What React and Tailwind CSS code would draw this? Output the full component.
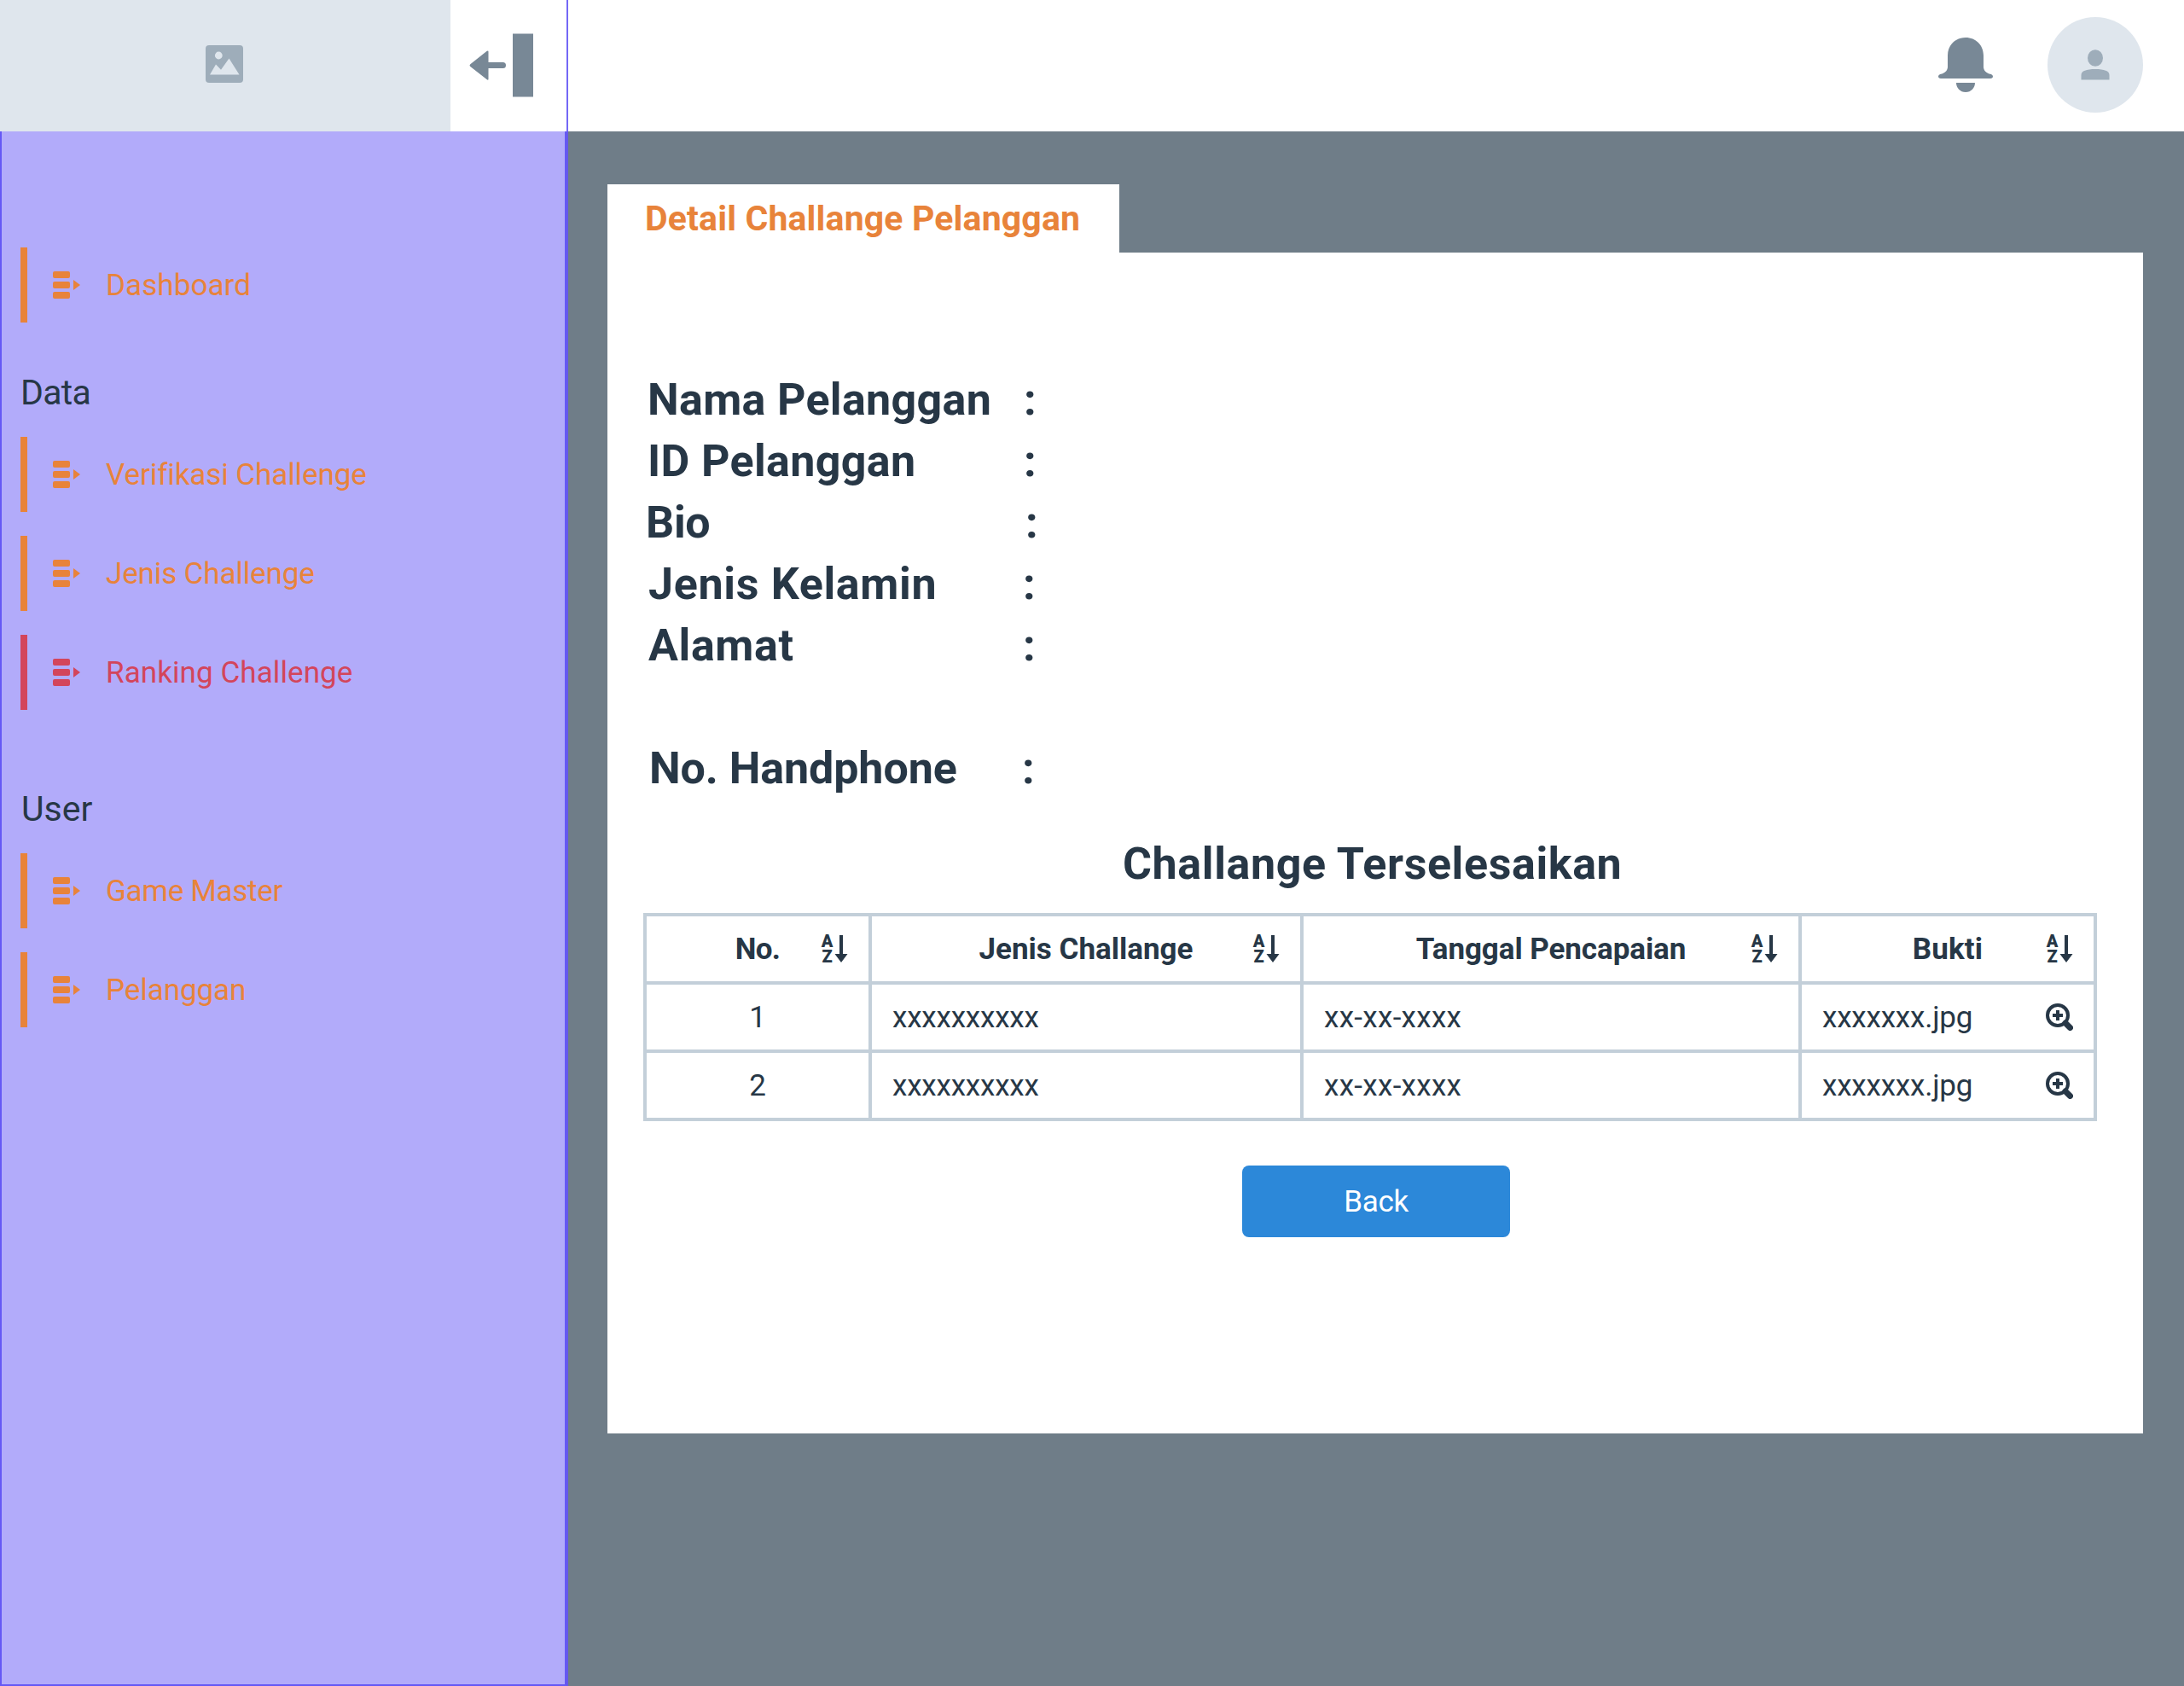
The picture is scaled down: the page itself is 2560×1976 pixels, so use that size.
const menuTop = [{ label: "Dashboard", text: "tracking-[0.08px]" }];
const menuData = [
  { label: "Verifikasi Challenge", text: "tracking-[-0.08px]" },
  { label: "Jenis Challenge", text: "tracking-[-0.14px]" },
  { label: "Ranking Challenge", text: "tracking-[0.08px]", active: true },
];
const menuUser = [
  { label: "Game Master", text: "tracking-[-0.3px]" },
  { label: "Pelanggan", text: "tracking-[-0.07px]" },
];

const fields = [
  { label: "Nama Pelanggan", box: "ml-[47px] w-[441px] tracking-[0.32px]" },
  { label: "ID Pelanggan", box: "ml-[47px] w-[441px] tracking-[0.35px]" },
  { label: "Bio", box: "ml-[45px] w-[445px] tracking-[-0.3px]" },
  { label: "Jenis Kelamin", box: "ml-[48px] w-[439px] tracking-[0.66px]" },
  { label: "Alamat", box: "ml-[48px] w-[439px] tracking-[0.6px]" },
  null,
  { label: "No. Handphone", box: "ml-[49px] w-[437px] tracking-[-0.1px]" },
];

const columns = [
  { label: "No.", text: "tracking-[-0.7px]" },
  { label: "Jenis Challange", text: "tracking-[0px]" },
  { label: "Tanggal Pencapaian", text: "tracking-[-0.08px]" },
  { label: "Bukti", text: "tracking-[0.13px]" },
];
const rows = ["1", "2"];

function ListIcon() {
  return (
    <svg viewBox="0 0 32 32" className="h-8 w-8 fill-current">
      <rect x="0" y="0" width="20" height="8" rx="2" />
      <rect x="0" y="12" width="20" height="8" rx="2" />
      <rect x="0" y="24" width="20" height="8" rx="2" />
      <path d="M24 10l8 6-8 6z" />
    </svg>
  );
}

function MenuItem({ item }) {
  return (
    <a className={`flex h-[88px] items-center border-l-8 pl-[30px] ${item.active ? "border-[#d3455b] text-[#d3455b]" : "border-[#e8833a] text-[#e8833a]"}`}>
      <ListIcon />
      <span className={`ml-[30px] pt-0.5 text-[35px] leading-[44px] whitespace-nowrap ${item.text}`}>{item.label}</span>
    </a>
  );
}

function Menu({ items, className }) {
  return (
    <nav className={`flex flex-col gap-7 ${className}`}>
      {items.map((item) => (
        <MenuItem key={item.label} item={item} />
      ))}
    </nav>
  );
}

function SortIcon() {
  return (
    <span className="flex h-8 w-8">
      <span className="flex w-[15px] flex-col items-center gap-1 text-[20px] leading-[14px] font-black">
        <span>A</span>
        <span>Z</span>
      </span>
      <svg viewBox="0 0 17 32" className="h-8 w-[17px] fill-current">
        <path d="M7 0h4v22h5.500L9 32 1.500 22H7z" />
      </svg>
    </span>
  );
}

function ZoomIcon() {
  return (
    <svg viewBox="0 0 32 32" className="h-8 w-8 fill-none stroke-current">
      <circle cx="14" cy="14" r="12" strokeWidth="4" />
      <path d="M8 14h12M14 8v12" strokeWidth="4" />
      <path d="M23 23l5.500 5.500" strokeWidth="7" strokeLinecap="round" />
    </svg>
  );
}

export default function App() {
  return (
    <div className="flex h-[1976px] w-[2560px] flex-col overflow-hidden bg-[#6f7d88] font-['Roboto',sans-serif] text-[#273746]">
      <header className="flex h-[154px] shrink-0 bg-white">
        <div className="flex w-[528px] items-start justify-center bg-[#dfe6ed] pr-0.5 pt-[53px]">
          <svg viewBox="0 0 44 44" className="h-11 w-11">
            <rect width="44" height="44" rx="4" fill="#9eadba" />
            <circle cx="15.3" cy="12" r="4.4" fill="#dfe6ed" />
            <path d="M5 34.5L12 22.5l6 6.2L27.5 15.5l12 19z" fill="#dfe6ed" />
          </svg>
        </div>
        <div className="flex w-[136px] justify-end pr-[39px] pt-[39px] text-[#788896]">
          <svg viewBox="0 0 75 75" className="h-[75px] w-[75px] fill-current">
            <path d="M1.3 36.200L20.500 21q2-1.400 2 .8V34H39.500a3.500 3.500 0 0 1 0 7H22.500V53.500q0 2-2 .6L1.300 38.900q-1.500-1.350 0-2.700z" />
            <rect x="51" y="0.5" width="24" height="74" />
          </svg>
        </div>
        <div className="w-0.5 bg-[#7468f6]" />
        <div className="flex flex-1 items-start justify-end gap-16 pr-12 pt-5">
          <svg viewBox="0 0 64 64" className="mt-6 h-16 w-16 fill-[#788896]">
            <path d="M11 21C11 9 20 0 32 0s21 9 21 21v13.500c0 4.500 4 7.500 8 8.300 4 .8 4 5.200 0 5.200H3c-4 0-4-4.400 0-5.200 4-.8 8-3.800 8-8.300z" />
            <path d="M21 53h22c0 6-4.500 11-11 11s-11-5-11-11z" />
          </svg>
          <div className="flex h-28 w-28 items-center justify-center rounded-full bg-[#dfe6ed]">
            <svg viewBox="0 0 34 36" className="h-9 w-[34px] fill-[#9eadba]">
              <ellipse cx="17" cy="10" rx="9" ry="9.800" />
              <path d="M0.500 35.500V30c0-5 6-7 16.500-7s16.500 2 16.500 7v5.500z" />
            </svg>
          </div>
        </div>
      </header>

      <div className="flex flex-1">
        <aside className="flex w-[664px] shrink-0 flex-col border-2 border-t-0 border-[#6558f5] bg-[#b2abfa] pl-[22px] pt-[136px]">
          <Menu items={menuTop} className="" />
          <h2 className="mt-[58px] text-[41px] leading-[48px] tracking-[-0.7px]">Data</h2>
          <Menu items={menuData} className="mt-7" />
          <h2 className="mt-[92px] pl-px text-[41px] leading-[48px]">User</h2>
          <Menu items={menuUser} className="mt-7" />
        </aside>
        <div className="w-0.5 bg-[#6558e8]" />

        <main className="flex flex-1 flex-col items-start pl-[46px] pr-12 pt-[62px]">
          <div className="flex h-20 w-[600px] items-center bg-white pl-11">
            <h1 className="text-[41px] leading-[48px] font-bold tracking-[0.14px] whitespace-nowrap text-[#e8833a]">Detail Challange Pelanggan</h1>
          </div>
          <section className="flex h-[1384px] w-[1800px] flex-col bg-white pt-[137px]">
            <dl className="text-[52px] leading-[72px] font-bold">
              {fields.map((field, i) =>
                field ? (
                  <div key={i} className="flex h-[72px]">
                    <dt className={`whitespace-nowrap ${field.box}`}>{field.label}</dt>
                    <dd>:</dd>
                  </div>
                ) : (
                  <div key={i} className="h-[72px]" />
                ),
              )}
            </dl>
            <h2 className="mt-[44px] pl-[604px] text-[52px] leading-[64px] font-bold tracking-[0.6px]">Challange Terselesaikan</h2>
            <div className="ml-[42px] mt-[25px] grid w-[1704px] grid-cols-[260px_502px_580px_342px] auto-rows-[76px] gap-1 bg-[#c3cfd9] p-1 text-[35px] leading-[44px]">
              {columns.map((column) => (
                <div key={column.label} className="grid grid-cols-[1fr_auto_1fr] items-center bg-white pr-6 pl-6">
                  <span />
                  <span className={`pt-0.5 font-bold whitespace-nowrap ${column.text}`}>{column.label}</span>
                  <span className="justify-self-end">
                    <SortIcon />
                  </span>
                </div>
              ))}
              {rows.map((no) => [
                <div key={`${no}-no`} className="flex items-center justify-center bg-white pt-0.5">{no}</div>,
                <div key={`${no}-jenis`} className="flex items-center bg-white pl-6 pt-0.5 tracking-[-0.2px]">xxxxxxxxxx</div>,
                <div key={`${no}-tanggal`} className="flex items-center bg-white pl-6 pt-0.5 tracking-[0.3px]">xx-xx-xxxx</div>,
                <div key={`${no}-bukti`} className="flex items-center justify-between bg-white pl-6 pr-6 tracking-[-0.2px]">
                  <span className="pt-0.5">xxxxxxx.jpg</span>
                  <ZoomIcon />
                </div>,
              ])}
            </div>
            <button className="ml-[744px] mt-[52px] h-[84px] w-[314px] rounded-lg bg-[#2c88d9] pt-0.5 text-[35px] leading-[44px] tracking-[-0.3px] text-white">Back</button>
          </section>
        </main>
      </div>
    </div>
  );
}
